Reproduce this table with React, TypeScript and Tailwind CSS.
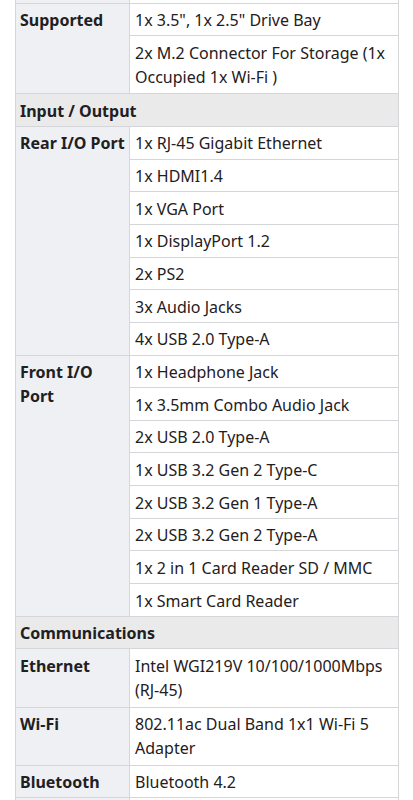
import React from 'react'

type Row = { label?: string; span?: number; value: string; tall?: boolean }
type Section = { title?: string; rows: Row[] }

const sections: Section[] = [
  {
    rows: [
      { label: 'Supported', span: 2, value: '1x 3.5", 1x 2.5" Drive Bay' },
      { value: '2x M.2 Connector For Storage (1x Occupied 1x Wi-Fi )', tall: true },
    ],
  },
  {
    title: 'Input / Output',
    rows: [
      { label: 'Rear I/O Port', span: 7, value: '1x RJ-45 Gigabit Ethernet' },
      { value: '1x HDMI1.4' },
      { value: '1x VGA Port' },
      { value: '1x DisplayPort 1.2' },
      { value: '2x PS2' },
      { value: '3x Audio Jacks' },
      { value: '4x USB 2.0 Type-A' },
      { label: 'Front I/O Port', span: 8, value: '1x Headphone Jack' },
      { value: '1x 3.5mm Combo Audio Jack' },
      { value: '2x USB 2.0 Type-A' },
      { value: '1x USB 3.2 Gen 2 Type-C' },
      { value: '2x USB 3.2 Gen 1 Type-A' },
      { value: '2x USB 3.2 Gen 2 Type-A' },
      { value: '1x 2 in 1 Card Reader SD / MMC' },
      { value: '1x Smart Card Reader' },
    ],
  },
  {
    title: 'Communications',
    rows: [
      { label: 'Ethernet', value: 'Intel WGI219V 10/100/1000Mbps (RJ-45)', tall: true },
      { label: 'Wi-Fi', value: '802.11ac Dual Band 1x1 Wi-Fi 5 Adapter', tall: true },
      { label: 'Bluetooth', value: 'Bluetooth 4.2' },
    ],
  },
]

const cell = 'border border-[#d4d6da] px-[4px] pt-[4.5px] align-top leading-[24px]'

export default function App() {
  return (
    <div className="h-[800px] overflow-hidden bg-white text-[16px] text-[#1f2022]" style={{ fontFamily: '"Noto Sans", "Open Sans", sans-serif' }}>
      <div className="px-[15px]">
        <table className="w-[384px] table-fixed border-collapse">
          <colgroup>
            <col className="w-[114px]" />
            <col />
          </colgroup>
          <tbody>
            {/* tail of the row above */}
            <tr>
              <td className="h-[3px] border-x border-[#d4d6da] bg-[#eef0f3] p-0" />
              <td className="h-[3px] border-x border-[#d4d6da] bg-white p-0" />
            </tr>
            {sections.map((s, si) => (
              <React.Fragment key={si}>
                {s.title && (
                  <tr>
                    <td colSpan={2} className={`${cell} pb-[3.17px] bg-[#eaeaea] font-bold`}>
                      {s.title}
                    </td>
                  </tr>
                )}
                {s.rows.map((r, ri) => (
                  <tr key={ri}>
                    {r.label && (
                      <td rowSpan={r.span ?? 1} className={`${cell} pb-[3.17px] bg-[#eef0f3] font-bold`}>
                        {r.label}
                      </td>
                    )}
                    <td className={`${cell} ${r.tall ? 'pb-[4.6px]' : 'pb-[3.17px]'} bg-white pl-[5px]`}>{r.value}</td>
                  </tr>
                ))}
              </React.Fragment>
            ))}
            {/* start of the next row */}
            <tr>
              <td className="h-[12px] border-x border-t border-[#d4d6da] bg-[#eef0f3] p-0" />
              <td className="h-[12px] border-x border-t border-[#d4d6da] bg-white p-0" />
            </tr>
          </tbody>
        </table>
      </div>
    </div>
  )
}
